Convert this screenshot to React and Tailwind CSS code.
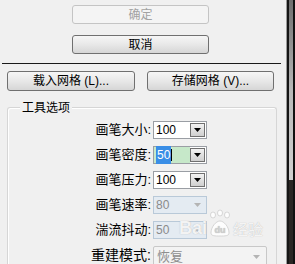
const cjk = { fontFamily: '"Liberation Sans", "Noto Sans CJK SC", sans-serif' };

function Button({ children, disabled, className = "" }) {
  return (
    <div
      className={
        "flex items-center justify-center rounded-[3px] border text-[12px] leading-none " +
        (disabled
          ? "border-[#c4c4c4] bg-[#f4f4f4] text-[#a2a2a2] "
          : "border-[#707070] bg-gradient-to-b from-[#f6f6f6] via-[#e8e8e8] to-[#d6d6d6] text-black ") +
        className
      }
    >
      {children}
    </div>
  );
}

function Arrow({ disabled }) {
  return (
    <svg width="7" height="4" viewBox="0 0 7 4">
      <path d="M0 0h7L3.5 4z" fill={disabled ? "#b4b4b4" : "#000"} />
    </svg>
  );
}

function Combo({ value, disabled, selected }) {
  return (
    <div
      className={
        "flex h-[18px] w-[54px] items-center border " +
        (disabled ? "border-[#b9c9d8] bg-[#e4ebf2]" : "border-[#9a9ea4] bg-white")
      }
    >
      <div
        className={
          "flex h-full flex-1 items-center pl-[2px] text-[12px] " +
          (disabled ? "text-[#8a8a8a]" : "text-black") +
          (selected ? " bg-[#c6e8c9]" : "")
        }
      >
        {selected ? (
          <span className="bg-[#3a8ee6] px-px text-white">{value}</span>
        ) : (
          value
        )}
        {selected && <span className="h-[12px] w-px bg-black" />}
      </div>
      <div
        className={
          "mr-[1px] flex h-[14px] w-[15px] items-center justify-center " +
          (disabled
            ? "bg-[#e4ebf2]"
            : "border border-[#707070] bg-gradient-to-b from-[#f2f2f2] to-[#cfcfcf]")
        }
      >
        <Arrow disabled={disabled} />
      </div>
    </div>
  );
}

function Row({ label, children, big }) {
  return (
    <div className="flex h-[18px] items-center">
      <div
        className={
          "w-[145px] pr-[2px] text-right text-black " + (big ? "text-[14px]" : "text-[13px]")
        }
      >
        {label}
      </div>
      {children}
    </div>
  );
}

export default function App() {
  return (
    <div className="relative flex h-[264px] w-[295px] overflow-hidden bg-[#f0f0f0]" style={cjk}>
      <div className="flex w-[286px] flex-col">
        <Button disabled className="ml-[72px] mt-[5px] h-[19px] w-[137px]">
          确定
        </Button>
        <Button className="ml-[72px] mt-[11px] h-[19px] w-[137px]">取消</Button>
        <div className="ml-[2px] mt-[9px] h-px w-[279px] bg-[#1a1a1a]" />
        <div className="mt-[7px] flex">
          <Button className="ml-[7px] h-[20px] w-[128px]">载入网格 (L)...</Button>
          <Button className="ml-[12px] h-[20px] w-[127px]">存储网格 (V)...</Button>
        </div>
        <div className="relative ml-[7px] mt-[16px] w-[270px] flex-1 rounded-t-[3px] border border-b-0 border-[#d6d6d6] shadow-[inset_1px_1px_0_#fff]">
          <div className="absolute -top-[7px] left-[12px] bg-[#f0f0f0] px-[2px] text-[12px] leading-[14px] text-black">
            工具选项
          </div>
          <div className="mt-[13px] flex flex-col gap-[7px]">
            <Row label="画笔大小:">
              <Combo value="100" />
            </Row>
            <Row label="画笔密度:">
              <Combo value="50" selected />
            </Row>
            <Row label="画笔压力:">
              <Combo value="100" />
            </Row>
            <Row label="画笔速率:">
              <Combo value="80" disabled />
            </Row>
            <Row label="湍流抖动:">
              <Combo value="50" disabled />
            </Row>
            <Row label="重建模式:" big>
              <div className="flex h-[22px] w-[114px] items-center self-start rounded-[2px] border border-[#c8c8c8] bg-[#f3f3f3] pl-[3px] pr-[6px] text-[13px] text-[#8e8e8e]">
                <span className="flex-1">恢复</span>
                <Arrow disabled />
              </div>
            </Row>
          </div>
        </div>
      </div>
      <div className="flex w-[9px]">
        <div className="w-px bg-[#9a9a9a]" />
        <div className="w-[2px] bg-[#151515]" />
        <div className="flex w-[4px] flex-col">
          <div className="h-[180px] bg-gradient-to-b from-[#6e6e6e] via-[#b8b8b8] to-[#d0d0d0]" />
          <div className="flex-1 bg-[#2a2624]" />
        </div>
        <div className="w-[2px] bg-[#111]" />
      </div>
      <div className="pointer-events-none absolute left-[179px] top-[209px] flex items-end text-white/85 [text-shadow:0_0_1px_#aaa]">
        <span className="text-[18px] font-bold leading-none">Bai</span>
        <svg width="24" height="28" viewBox="0 0 24 28" className="mx-px">
          <g fill="rgba(255,255,255,0.85)" stroke="#c0c0c0" strokeWidth="0.6">
            <ellipse cx="5" cy="6" rx="2.5" ry="3" />
            <ellipse cx="12" cy="4" rx="2.5" ry="3" />
            <ellipse cx="19" cy="6" rx="2.5" ry="3" />
            <path d="M3 24c0-6 5-12 9-12s9 6 9 12c0 3-4 3-9 3s-9 0-9-3z" />
          </g>
          <text x="12" y="24" textAnchor="middle" fontSize="9" fontWeight="bold" fill="#d0d0d0" fontFamily="Liberation Sans">
            du
          </text>
        </svg>
        <span className="text-[15px] leading-none">经验</span>
      </div>
    </div>
  );
}
